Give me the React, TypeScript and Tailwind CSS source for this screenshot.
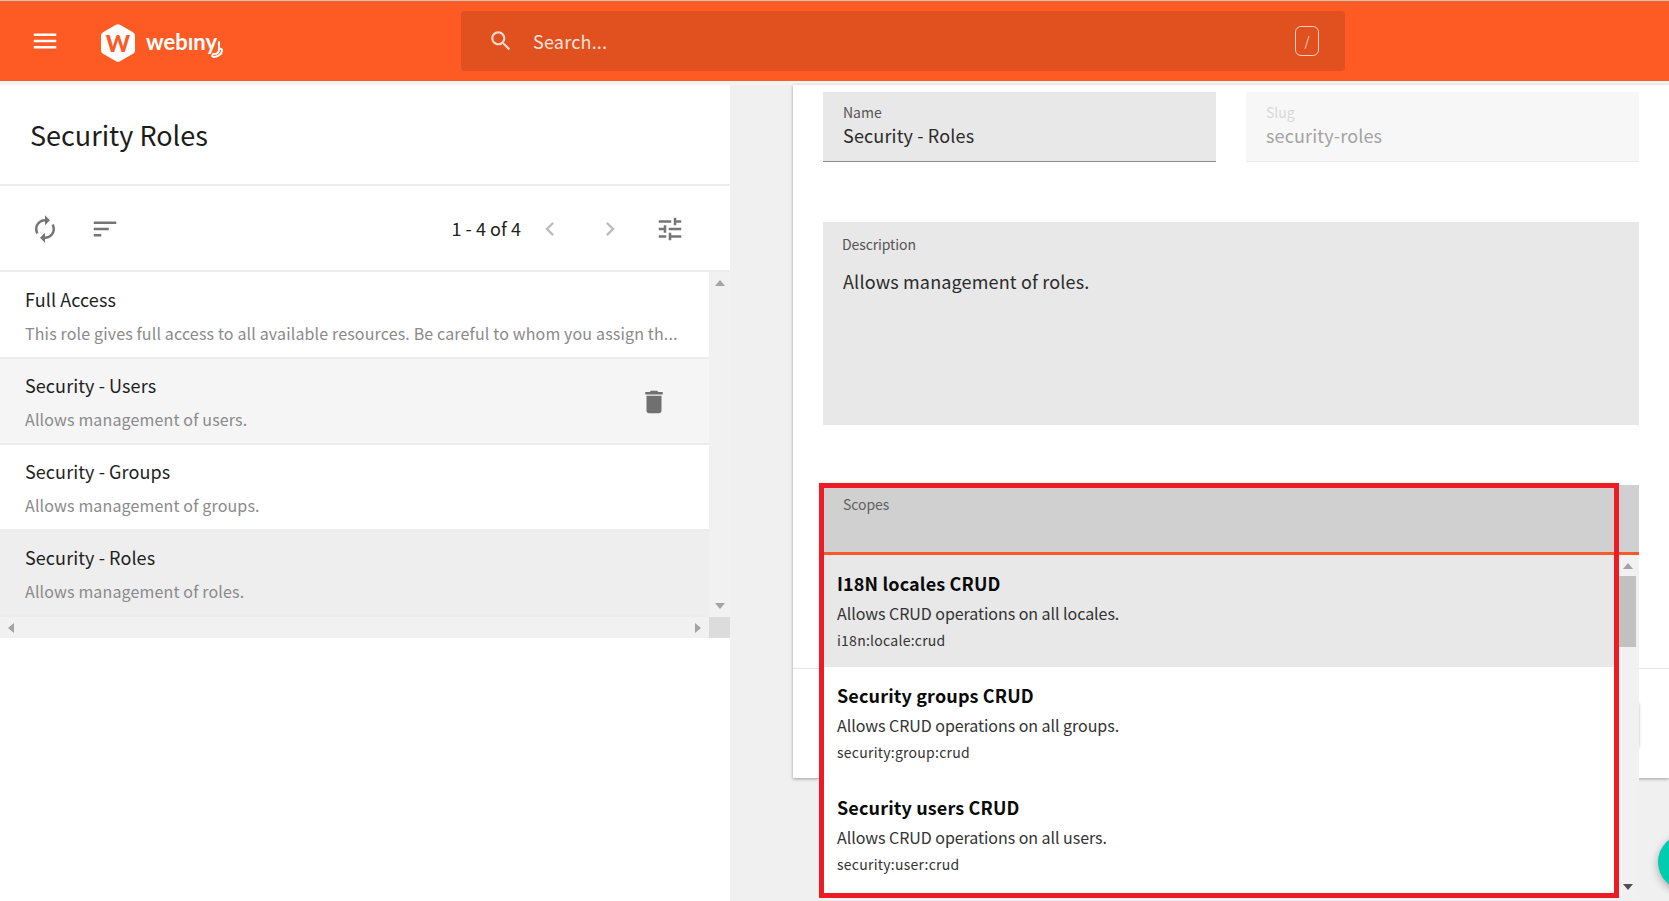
import { ReactNode } from 'react';

const FONT = "font-['Noto_Sans_CJK_SC','Source_Sans_Pro',sans-serif]";

const ICONS = {
  menu: 'M3 18h18v-2H3v2zm0-5h18v-2H3v2zm0-7v2h18V6H3z',
  search:
    'M15.5 14h-.79l-.28-.27C15.41 12.59 16 11.11 16 9.5 16 5.91 13.09 3 9.5 3S3 5.91 3 9.5 5.91 16 9.5 16c1.61 0 3.09-.59 4.23-1.57l.27.28v.79l5 4.99L20.49 19l-4.99-5zm-6 0C7.01 14 5 11.99 5 9.5S7.01 5 9.5 5 14 7.01 14 9.5 11.99 14 9.5 14z',
  refresh:
    'M12 6v3l4-4-4-4v3c-4.42 0-8 3.58-8 8 0 1.57.46 3.03 1.24 4.26L6.7 14.8c-.45-.83-.7-1.79-.7-2.8 0-3.31 2.69-6 6-6zm6.76 1.74L17.3 9.2c.44.84.7 1.79.7 2.8 0 3.31-2.69 6-6 6v-3l-4 4 4 4v-3c4.42 0 8-3.58 8-8 0-1.57-.46-3.03-1.24-4.26z',
  sort: 'M3 18h6v-2H3v2zM3 6v2h18V6H3zm0 7h12v-2H3v2z',
  left: 'M15.41 7.41L14 6l-6 6 6 6 1.41-1.41L10.83 12z',
  right: 'M10 6L8.59 7.41 13.17 12l-4.58 4.59L10 18l6-6z',
  tune: 'M3 17v2h6v-2H3zM3 5v2h10V5H3zm10 16v-2h8v-2h-8v-2h-2v6h2zM7 9v2H3v2h4v2h2V9H7zm14 4v-2H11v2h10zm-6-4h2V7h4V5h-4V3h-2v6z',
  trash: 'M6 19c0 1.1.9 2 2 2h8c1.1 0 2-.9 2-2V7H6v12zM19 4h-3.5l-1-1h-5l-1 1H5v2h14V4z',
};

function Icon({ d, className }: { d: string; className: string }) {
  return (
    <svg viewBox="0 0 24 24" className={className} fill="currentColor">
      <path d={d} />
    </svg>
  );
}

function Arrow({ dir, className }: { dir: 'up' | 'down' | 'left' | 'right'; className: string }) {
  const points = {
    up: '0,8 5,2 10,8',
    down: '0,2 5,8 10,2',
    left: '8,0 2,5 8,10',
    right: '2,0 8,5 2,10',
  }[dir];
  return (
    <svg viewBox="0 0 10 10" className={`w-[10px] h-[10px] ${className}`} fill="currentColor">
      <polygon points={points} />
    </svg>
  );
}

function Logo() {
  return (
    <div className="flex items-center gap-[11px] mt-[4px]">
      <div className="relative w-[34px] h-[38px] flex items-center justify-center">
        <svg viewBox="0 0 34 38" className="absolute inset-0 w-[34px] h-[38px]" fill="#ffffff">
          <path d="M15 .8a4 4 0 0 1 4 0l13 7.4a4 4 0 0 1 2 3.4v14.8a4 4 0 0 1-2 3.4l-13 7.4a4 4 0 0 1-4 0L2 29.8a4 4 0 0 1-2-3.4V11.6a4 4 0 0 1 2-3.4z" />
        </svg>
        <span className="relative font-['Lato',sans-serif] font-black text-[23px] leading-none text-[#fa5a28]">W</span>
      </div>
      <div className="relative w-[78px]">
        <span className="font-['Lato',sans-serif] font-bold text-[22px] leading-none text-white">webıny</span>
        <svg viewBox="0 0 20 20" className="absolute left-[60px] top-[9px] w-[20px] h-[20px]" fill="none" stroke="#ffffff" strokeWidth="2" strokeLinecap="round">
          <path d="M13 2v7c0 3-2 5-5 5-2 0-2.600 3 0 3 3 0 8-3 8-6 0-2-1-2.500-2-2" />
        </svg>
      </div>
    </div>
  );
}

function Header() {
  return (
    <header className="h-[80px] shrink-0 bg-[#fe5a23] flex items-center relative">
      <div className="w-[461px] shrink-0 pl-[30px] flex items-center gap-[41px]">
        <Icon d={ICONS.menu} className="w-[30px] h-[30px] text-white -mt-[1px]" />
        <Logo />
      </div>
      <div className="w-[884px] h-[60px] rounded-[4px] bg-[#e1501f] flex items-center pl-[27px] pr-[26px]">
        <Icon d={ICONS.search} className="w-[26px] h-[26px] text-[#fbd8cb]" />
        <span className="ml-[19px] text-[18px] tracking-[0.2px] text-[#fde4da]">Search...</span>
        <span className="ml-auto w-[24px] h-[30px] rounded-[6px] border border-[#fbd0c0] flex items-center justify-center text-[13px] text-[#fbd0c0]">/</span>
      </div>
    </header>
  );
}

const ROLES = [
  { title: 'Full Access', text: 'This role gives full access to all available resources. Be careful to whom you assign th...', bg: 'bg-white' },
  { title: 'Security - Users', text: 'Allows management of users.', bg: 'bg-[#f5f5f5]', trash: true },
  { title: 'Security - Groups', text: 'Allows management of groups.', bg: 'bg-white' },
  { title: 'Security - Roles', text: 'Allows management of roles.', bg: 'bg-[#eeeeee]' },
];

function RoleRow({ title, text, bg, trash }: { title: string; text: string; bg: string; trash?: boolean }) {
  return (
    <div className={`h-[86px] border-b-2 border-[#ececec] pl-[25px] pr-[26px] pt-[2px] flex items-center ${bg}`}>
      <div className="min-w-0 flex-1">
        <div className="text-[18px] leading-[24px] tracking-[0.08px] text-[#1f1f1f] whitespace-nowrap">{title}</div>
        <div className="mt-[10px] text-[16px] leading-[24px] tracking-[0.15px] text-[#8a8a8a] whitespace-nowrap">{text}</div>
      </div>
      {trash && <Icon d={ICONS.trash} className="w-[30px] h-[30px] text-[#707070] mr-[14px] ml-[15px] shrink-0 -mt-[1px]" />}
    </div>
  );
}

function ListPanel() {
  return (
    <aside className="w-[730px] shrink-0 bg-white">
      <div className="h-[101px] border-b-2 border-[#ececec] pl-[30px] flex items-center">
        <h1 className="text-[27px] leading-[36px] text-[#1c1c1c] mt-[1px]">Security Roles</h1>
      </div>
      <div className="h-[86px] border-b-2 border-[#ececec] flex items-center pl-[30px] pr-[45px] pt-[2px] text-[#757575]">
        <Icon d={ICONS.refresh} className="w-[30px] h-[30px]" />
        <Icon d={ICONS.sort} className="ml-[30px] w-[30px] h-[30px]" />
        <span className="ml-auto -mt-[2px] text-[18px] tracking-[0.05px] text-[#222222]">1 - 4 of 4</span>
        <Icon d={ICONS.left} className="ml-[15px] w-[28px] h-[28px] text-[#bdbdbd]" />
        <Icon d={ICONS.right} className="ml-[32px] w-[28px] h-[28px] text-[#bdbdbd]" />
        <Icon d={ICONS.tune} className="ml-[31px] w-[30px] h-[30px]" />
      </div>
      <div className="flex">
        <div className="w-[709px] pt-px overflow-hidden">
          {ROLES.map(r => (
            <RoleRow key={r.title} {...r} />
          ))}
        </div>
        <div className="w-[21px] bg-[#f1f1f1] flex flex-col items-center justify-between py-[6px]">
          <Arrow dir="up" className="text-[#a3a3a3]" />
          <Arrow dir="down" className="text-[#a3a3a3]" />
        </div>
      </div>
      <div className="flex h-[21px]">
        <div className="w-[709px] bg-[#f1f1f1] flex items-center justify-between px-[6px]">
          <Arrow dir="left" className="text-[#a3a3a3]" />
          <Arrow dir="right" className="text-[#a3a3a3]" />
        </div>
        <div className="w-[21px] bg-[#dcdcdc]" />
      </div>
    </aside>
  );
}

function Field({ label, children, disabled }: { label: string; children: ReactNode; disabled?: boolean }) {
  return (
    <div className={`h-[70px] pl-[20px] pt-[11px] border-b ${disabled ? 'bg-[#f7f7f7] border-[#ececec]' : 'bg-[#e8e8e8] border-[#8d8d8d]'}`}>
      <div className={`text-[14px] leading-[18px] ${disabled ? 'text-[#d8d8d8]' : 'text-[#555555]'}`}>{label}</div>
      <div className={`text-[18px] leading-[26px] tracking-[0.15px] mt-[1px] ${disabled ? 'text-[#a3a3a3]' : 'text-[#2b2b2b]'}`}>{children}</div>
    </div>
  );
}

const SCOPES = [
  { title: 'I18N locales CRUD', text: 'Allows CRUD operations on all locales.', code: 'i18n:locale:crud', bg: 'bg-[#e8e8e8]' },
  { title: 'Security groups CRUD', text: 'Allows CRUD operations on all groups.', code: 'security:group:crud', bg: 'bg-white' },
  { title: 'Security users CRUD', text: 'Allows CRUD operations on all users.', code: 'security:user:crud', bg: 'bg-white' },
];

function ScopesField() {
  return (
    <div className="relative z-10 mt-[60px]">
      <div className="h-[70px] bg-[#d0d0d0] border-b-[3px] border-[#fa5a28] pl-[20px] pt-[10px] text-[14px] leading-[18px] tracking-[-0.05px] text-[#5f5f5f]">Scopes</div>
      {/* open dropdown */}
      <div className="absolute top-full left-0 right-0 h-[343px] bg-white flex overflow-hidden">
        <div className="flex-1 min-w-0">
          {SCOPES.map(s => (
            <div key={s.code} className={`h-[112px] pl-[14px] pt-[15px] ${s.bg}`}>
              <div className="text-[18px] leading-[26px] font-bold text-[#0a0a0a] tracking-[0.14px]">{s.title}</div>
              <div className="text-[16px] leading-[24px] tracking-[-0.05px] mt-[5px] text-[#333333]">{s.text}</div>
              <div className="text-[14px] leading-[18px] mt-[6px] text-[#333333] tracking-[0.25px]">{s.code}</div>
            </div>
          ))}
        </div>
        <div className="relative w-[21px] bg-[#f1f1f1] flex flex-col items-center justify-between py-[6px]">
          <Arrow dir="up" className="text-[#a3a3a3] -ml-[2px]" />
          <Arrow dir="down" className="text-[#505050] -ml-[2px]" />
          <div className="absolute left-0 top-[21px] w-[18px] h-[71px] bg-[#c1c1c1]" />
        </div>
      </div>
      {/* red annotation frame */}
      <div className="absolute -left-[4px] -top-[2px] w-[800px] h-[415px] border-[5px] border-[#ed1c24] pointer-events-none" />
    </div>
  );
}

function DetailPanel() {
  return (
    <main className="flex-1 min-w-0 bg-[#f0f0f0] pl-[63px]">
      <div className="bg-white shadow-[0_1px_3px_rgba(0,0,0,0.35)] h-[693px]">
        <div className="pt-[7px] pl-[30px] pr-[30px] h-[583px]">
          <div className="grid grid-cols-2 gap-[30px]">
            <Field label="Name">Security - Roles</Field>
            <Field label="Slug" disabled>security-roles</Field>
          </div>
          <div className="mt-[60px] h-[203px] bg-[#e8e8e8] pl-[19px] pt-[13px]">
            <div className="text-[14px] leading-[18px] tracking-[-0.1px] text-[#555555]">Description</div>
            <div className="mt-[15px] pl-[1px] text-[18px] leading-[26px] tracking-[0.16px] text-[#2b2b2b]">Allows management of roles.</div>
          </div>
          <ScopesField />
        </div>
        {/* footer: its button sits behind the open dropdown, only the shadow shows */}
        <div className="border-t border-[#e5e5e5] pt-[33px] pr-[30px] flex justify-end">
          <div className="w-[140px] h-[47px] rounded-[4px] bg-white shadow-[0_0_3px_rgba(0,0,0,0.3)]" />
        </div>
      </div>
    </main>
  );
}

export default function App() {
  return (
    <div className={`relative h-[901px] overflow-hidden flex flex-col bg-[#f3f3f3] ${FONT} antialiased`}>
      <div className="h-px shrink-0 bg-[#c4c4c4]" />
      <Header />
      <div className="flex-1 min-h-0 mt-[4px] flex">
        <ListPanel />
        <DetailPanel />
      </div>
      {/* floating action button, cut by the window edge */}
      <div className="absolute left-[1658px] top-[834px] w-[56px] h-[56px] rounded-full bg-[#00ccb0] shadow-[0_3px_8px_rgba(0,0,0,0.3)]" />
    </div>
  );
}
